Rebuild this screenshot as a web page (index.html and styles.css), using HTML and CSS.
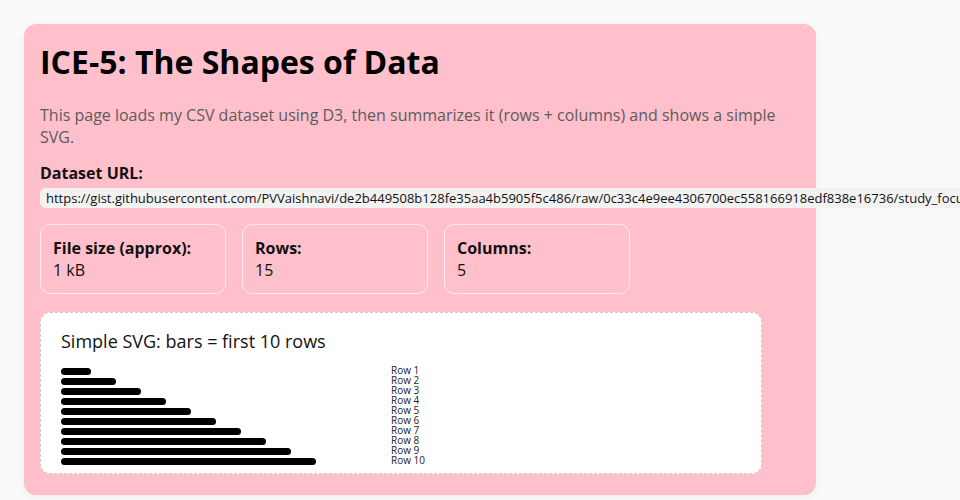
FILE: index.html
```html
<!DOCTYPE html>
<html lang="en">
<head>
<meta charset="utf-8">
<title>ICE-5: The Shapes of Data</title>
<link rel="stylesheet" href="styles.css">
</head>
<body>
<main class="card">
  <h1 class="title">ICE-5: The Shapes of Data</h1>
  <p class="intro">This page loads my CSV dataset using D3, then summarizes it (rows + columns) and shows a simple SVG.</p>
  <div class="url-label">Dataset URL:</div>
  <code class="url">https://gist.githubusercontent.com/PVVaishnavi/de2b449508b128fe35aa4b5905f5c486/raw/0c33c4e9ee4306700ec558166918edf838e16736/study_focus.csv</code>
  <section class="stats">
    <div class="stat"><div class="stat-label">File size (approx):</div><div class="stat-value">1 kB</div></div>
    <div class="stat"><div class="stat-label">Rows:</div><div class="stat-value">15</div></div>
    <div class="stat"><div class="stat-label">Columns:</div><div class="stat-value">5</div></div>
  </section>
  <section class="chart">
    <h2 class="chart-title">Simple SVG: bars = first 10 rows</h2>
    <svg class="bars" width="380" height="104" viewBox="0 0 380 104">
      <g fill="#000">
        <rect x="0" y="4" width="30" height="7" rx="3.5"/>
        <rect x="0" y="14" width="55" height="7" rx="3.5"/>
        <rect x="0" y="24" width="80" height="7" rx="3.5"/>
        <rect x="0" y="34" width="105" height="7" rx="3.5"/>
        <rect x="0" y="44" width="130" height="7" rx="3.5"/>
        <rect x="0" y="54" width="155" height="7" rx="3.5"/>
        <rect x="0" y="64" width="180" height="7" rx="3.5"/>
        <rect x="0" y="74" width="205" height="7" rx="3.5"/>
        <rect x="0" y="84" width="230" height="7" rx="3.5"/>
        <rect x="0" y="94" width="255" height="7" rx="3.5"/>
      </g>
      <g class="bar-labels">
        <text x="330" y="10">Row 1</text>
        <text x="330" y="20">Row 2</text>
        <text x="330" y="30">Row 3</text>
        <text x="330" y="40">Row 4</text>
        <text x="330" y="50">Row 5</text>
        <text x="330" y="60">Row 6</text>
        <text x="330" y="70">Row 7</text>
        <text x="330" y="80">Row 8</text>
        <text x="330" y="90">Row 9</text>
        <text x="330" y="100">Row 10</text>
      </g>
    </svg>
  </section>
</main>
</body>
</html>
```
FILE: styles.css
```css
html, body {
  margin: 0;
  padding: 0;
}
body {
  background: #fafafa;
  font-family: "Open Sans", "Noto Sans", sans-serif;
  color: #111;
  padding: 24px;
}
.card {
  width: 792px;
  box-sizing: border-box;
  background: #ffc0cb;
  border-radius: 12px;
  padding: 16px;
  box-shadow: 0 2px 8px rgba(0, 0, 0, 0.05);
}
.title {
  font-size: 32px;
  font-weight: 700;
  margin: 0 0 21px;
  line-height: normal;
  color: #000;
}
.intro {
  font-size: 16px;
  color: #5c5c5c;
  margin: 0 0 14px;
}
.url-label {
  font-weight: 700;
  font-size: 16px;
  margin-bottom: 2px;
}
.url {
  display: inline-block;
  font-family: "Open Sans", "Noto Sans", sans-serif;
  font-size: 13px;
  line-height: 20px;
  padding: 0 6px;
  background: #f2f2f2;
  border-radius: 6px;
  white-space: nowrap;
  color: #111;
}
.stats {
  display: flex;
  gap: 16px;
  margin-top: 16px;
}
.stat {
  width: 186px;
  box-sizing: border-box;
  padding: 12px;
  border: 1px solid rgba(255, 255, 255, 0.65);
  border-radius: 10px;
  font-size: 16px;
}
.stat-label {
  font-weight: 700;
}
.chart {
  margin: 18px 0 5px;
  width: 722px;
  box-sizing: border-box;
  background: #fff;
  border: 1px dashed #c8c8c8;
  border-radius: 10px;
  padding: 16px 20px 5px;
}
.chart-title {
  font-size: 18px;
  font-weight: 400;
  margin: 0 0 11px;
  color: #111;
}
.bars {
  display: block;
}
.bar-labels text {
  font-family: "Open Sans", "Noto Sans", sans-serif;
  font-size: 10px;
  fill: #222;
}
```
